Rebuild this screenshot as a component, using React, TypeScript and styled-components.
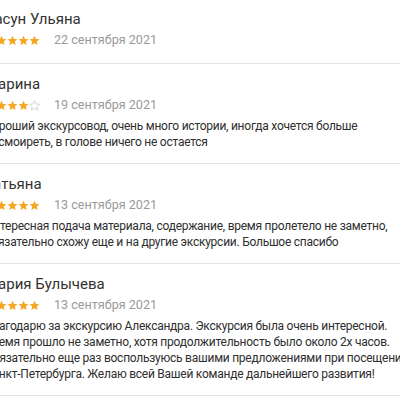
import React from "react";
import styled, { createGlobalStyle } from "styled-components";

const Global = createGlobalStyle`
  html, body { margin: 0; padding: 0; background: #fff; overflow: hidden; }
  body { font-family: Roboto, "Liberation Sans", Arial, sans-serif; }
`;

const Viewport = styled.div`
  width: 400px;
  height: 400px;
  overflow: hidden;
`;

const List = styled.div`
  margin: -1px 0 0 -15px;
  width: 430px;
  display: flex;
  flex-direction: column;
`;

const Item = styled.div`
  padding: 10px 0 13px;
  border-bottom: 1px solid #e4e4e4;
`;

const Name = styled.div`
  font-size: 15px;
  line-height: 20px;
  color: #333;
  white-space: nowrap;
`;

const Meta = styled.div`
  margin-top: 1px;
  height: 20px;
  display: flex;
  align-items: center;
  gap: 14px;
`;

const Stars = styled.div`
  display: flex;
  gap: 0;
`;

const Date = styled.span`
  font-size: 12.6px;
  color: #9a9a9a;
  line-height: 20px;
`;

const Text = styled.p`
  margin: 3px 0 0;
  font-size: 12px;
  letter-spacing: -0.25px;
  line-height: 16px;
  color: #2e2e2e;
`;

const Star = ({ filled }: { filled: boolean }) => (
  <svg width="11" height="11" viewBox="0 0 24 24">
    <path
      d="M12 1.5l3.2 7.1 7.7.7-5.9 5.1 1.8 7.6L12 18l-6.8 4 1.8-7.6-5.9-5.1 7.7-.7z"
      fill={filled ? "#f5a623" : "none"}
      stroke={filled ? "#f5a623" : "#c4c4c4"}
      strokeWidth={filled ? 0 : 1.5}
    />
  </svg>
);

type Review = { name: string; rating: number; date: string; text?: string };

const reviews: Review[] = [
  { name: "Басун Ульяна", rating: 5, date: "22 сентября 2021" },
  {
    name: "Марина",
    rating: 4,
    date: "19 сентября 2021",
    text: "Хороший экскурсовод, очень много истории, иногда хочется больше посмоиреть, в голове ничего не остается",
  },
  {
    name: "Татьяна",
    rating: 5,
    date: "13 сентября 2021",
    text: "Интересная подача материала, содержание, время пролетело не заметно, обязательно схожу еще и на другие экскурсии. Большое спасибо",
  },
  {
    name: "Мария Булычева",
    rating: 5,
    date: "13 сентября 2021",
    text: "Благодарю за экскурсию Александра. Экскурсия была очень интересной. Время прошло не заметно, хотя продолжительность было около 2х часов. Обязательно еще раз воспользуюсь вашими предложениями при посещении Санкт-Петербурга. Желаю всей Вашей команде дальнейшего развития!",
  },
];

export default function App() {
  return (
    <Viewport>
      <Global />
      <List>
        {reviews.map((r, i) => (
          <Item key={i}>
            <Name>{r.name}</Name>
            <Meta>
              <Stars>
                {[0, 1, 2, 3, 4].map((s) => (
                  <Star key={s} filled={s < r.rating} />
                ))}
              </Stars>
              <Date>{r.date}</Date>
            </Meta>
            {r.text && <Text>{r.text}</Text>}
          </Item>
        ))}
      </List>
    </Viewport>
  );
}
